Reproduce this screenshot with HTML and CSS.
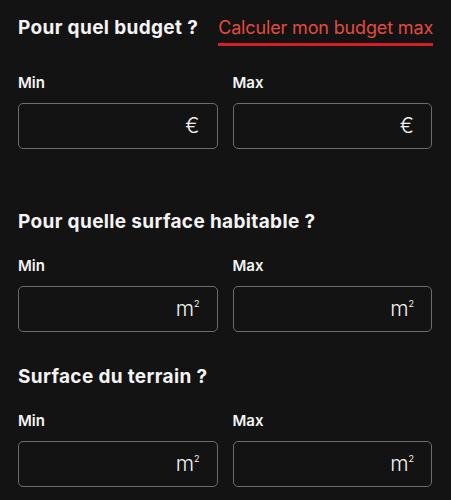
FILE: index.html
```html
<!DOCTYPE html>
<html lang="fr">
<head>
<meta charset="utf-8">
<title>Recherche</title>
<link rel="stylesheet" href="styles.css">
</head>
<body>
<main class="form">
  <section class="group group-budget">
    <div class="group-head">
      <h2 class="group-title">Pour quel budget ?</h2>
      <a class="link" href="#">Calculer mon budget max</a>
    </div>
    <div class="fields">
      <div class="field">
        <span class="label">Min</span>
        <div class="input"><span class="unit">€</span></div>
      </div>
      <div class="field">
        <span class="label">Max</span>
        <div class="input"><span class="unit">€</span></div>
      </div>
    </div>
  </section>
  <section class="group">
    <h2 class="group-title">Pour quelle surface habitable ?</h2>
    <div class="fields">
      <div class="field">
        <span class="label">Min</span>
        <div class="input"><span class="unit">m<sup class="sq">2</sup></span></div>
      </div>
      <div class="field">
        <span class="label">Max</span>
        <div class="input"><span class="unit">m<sup class="sq">2</sup></span></div>
      </div>
    </div>
  </section>
  <section class="group">
    <h2 class="group-title">Surface du terrain ?</h2>
    <div class="fields">
      <div class="field">
        <span class="label">Min</span>
        <div class="input"><span class="unit">m<sup class="sq">2</sup></span></div>
      </div>
      <div class="field">
        <span class="label">Max</span>
        <div class="input"><span class="unit">m<sup class="sq">2</sup></span></div>
      </div>
    </div>
  </section>
</main>
</body>
</html>
```

FILE: styles.css
```css
html, body {
  margin: 0;
  padding: 0;
  background: #131313;
}
body {
  font-family: Inter, "Noto Sans", sans-serif;
  color: #f4f4f4;
}
.form {
  display: flex;
  flex-direction: column;
  gap: 33px;
  padding: 16px 0 0 18px;
  width: 414px;
}
.group {
  display: flex;
  flex-direction: column;
  gap: 22px;
}
.group-budget {
  gap: 27px;
  margin-bottom: 28px;
}
.group-head {
  display: flex;
  align-items: flex-start;
  gap: 20px;
  white-space: nowrap;
}
.group-title {
  margin: 0;
  font-size: 19px;
  line-height: 24px;
  font-weight: 700;
  letter-spacing: 0.35px;
  white-space: nowrap;
  flex-shrink: 0;
}
.link {
  display: inline-block;
  flex-shrink: 0;
  font-size: 18px;
  line-height: 24px;
  font-weight: 400;
  color: #e24c3e;
  text-decoration: none;
  padding-bottom: 3px;
  border-bottom: 3px solid #d61e27;
  letter-spacing: -0.15px;
}
.fields {
  display: grid;
  grid-template-columns: 1fr 1fr;
  gap: 15px;
}
.field {
  display: flex;
  flex-direction: column;
  gap: 10px;
}
.label {
  font-size: 15px;
  line-height: 20px;
  font-weight: 600;
}
.input {
  height: 46px;
  box-sizing: border-box;
  border: 1px solid #6c6c6c;
  border-radius: 5px;
  display: flex;
  align-items: center;
  justify-content: flex-end;
  padding-right: 17px;
}
.unit {
  font-size: 21px;
  font-weight: 300;
  line-height: 20px;
  color: #f2f2f2;
}
.sq {
  font-size: 9px;
  line-height: 0;
  vertical-align: 9px;
  font-weight: 400;
}
```
